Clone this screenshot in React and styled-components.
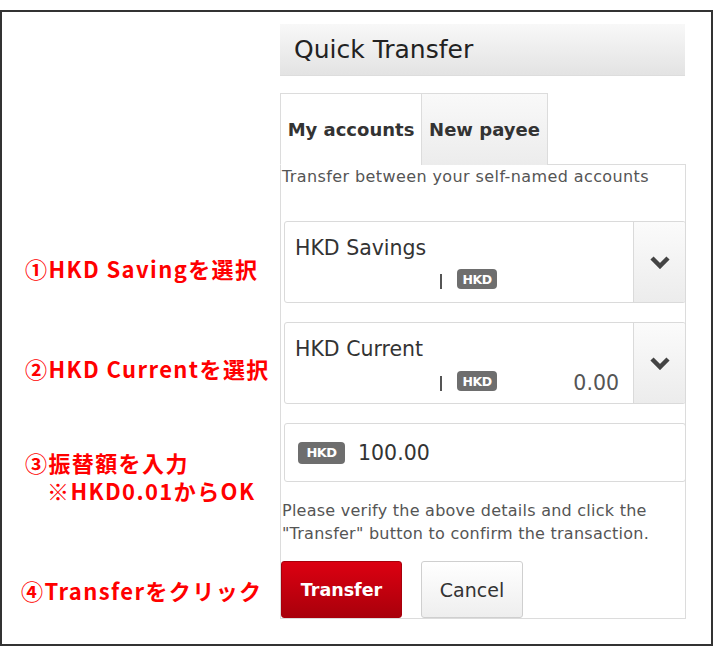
import React from "react";
import styled, { createGlobalStyle } from "styled-components";

const Global = createGlobalStyle`
  body {
    margin: 0;
    background: #fff;
  }
`;

const Frame = styled.div`
  margin-top: 10px;
  width: 713px;
  height: 636px;
  box-sizing: border-box;
  border: 2px solid #333;
  display: grid;
  grid-template-columns: 278px 406px;
  align-items: start;
`;

const Notes = styled.div`
  display: flex;
  flex-direction: column;
  padding-top: 242px;
  font-family: "Noto Sans CJK JP", sans-serif;
  font-weight: 700;
  font-size: 22px;
  letter-spacing: 1.4px;
  color: #ff0000;
`;

const Note = styled.div`
  line-height: 28px;
  white-space: nowrap;
  margin-top: ${(p) => p.$top || 0}px;
  padding-left: ${(p) => p.$left ?? 23}px;
`;

const NoteSub = styled.span`
  margin-left: 22px;
`;

const Widget = styled.div`
  padding-top: 12px;
  font-family: "DejaVu Sans", sans-serif;
  color: #333;
`;

const Header = styled.div`
  height: 52px;
  width: 405px;
  display: flex;
  align-items: center;
  padding-left: 14px;
  box-sizing: border-box;
  font-size: 25px;
  color: #222;
  background: linear-gradient(#f8f8f8, #e3e3e3);
  border-bottom: 1px solid #ddd;
`;

const Tabs = styled.div`
  display: flex;
  margin-top: 17px;
  position: relative;
  z-index: 1;
`;

const Tab = styled.div`
  height: 72px;
  box-sizing: border-box;
  display: flex;
  align-items: center;
  justify-content: center;
  font-weight: 700;
  font-size: 18px;
  color: #333;
  border: 1px solid #dcdcdc;
  border-bottom: ${(p) => (p.$active ? "1px solid #fff" : "none")};
  width: ${(p) => p.$w}px;
  background: ${(p) => (p.$active ? "#fff" : "linear-gradient(#f9f9f9, #ececec)")};
  margin-left: ${(p) => (p.$active ? 0 : -1)}px;
  margin-bottom: -1px;
`;

const Panel = styled.div`
  width: 406px;
  box-sizing: border-box;
  border: 1px solid #dcdcdc;
  display: flex;
  flex-direction: column;
  padding: 0 0 0 1px;
`;

const Hint = styled.p`
  margin: 0;
  padding-top: 1px;
  font-size: 16px;
  letter-spacing: 0.4px;
  line-height: 22px;
  color: #555;
  white-space: nowrap;
`;

const Select = styled.div`
  margin: ${(p) => p.$top}px 0 0 2px;
  width: 402px;
  height: 82px;
  box-sizing: border-box;
  border: 1px solid #dadada;
  border-radius: 3px;
  display: flex;
  overflow: hidden;
`;

const SelectBody = styled.div`
  flex: 1;
  padding: 13px 14px 0 10px;
  display: flex;
  flex-direction: column;
`;

const AccountName = styled.div`
  font-size: 20.5px;
  line-height: 26px;
  color: #333;
`;

const AccountLine = styled.div`
  display: grid;
  grid-template-columns: 162px auto 1fr;
  align-items: center;
  margin-top: 5px;
  height: 26px;
`;

const Bar = styled.span`
  justify-self: end;
  width: 2px;
  height: 15px;
  background: #555;
  margin-right: 15px;
  margin-top: 4px;
`;

const Badge = styled.span`
  display: inline-flex;
  align-items: center;
  justify-content: center;
  background: #6e6e6e;
  color: #fff;
  font-weight: 700;
  border-radius: 4px;
  letter-spacing: -0.5px;
  width: ${(p) => (p.$big ? 47 : 40)}px;
  height: ${(p) => (p.$big ? 22 : 20)}px;
  font-size: ${(p) => (p.$big ? 13 : 12.5)}px;
`;

const Balance = styled.span`
  justify-self: end;
  font-size: 20.5px;
  color: #555;
  margin-top: 4px;
`;

const DropButton = styled.div`
  width: 51px;
  border-left: 1px solid #dadada;
  background: linear-gradient(#fbfbfb, #ececec);
  display: flex;
  align-items: center;
  justify-content: center;
`;

const AmountBox = styled.div`
  margin: 19px 0 0 2px;
  width: 402px;
  height: 59px;
  box-sizing: border-box;
  border: 1px solid #dadada;
  border-radius: 3px;
  display: flex;
  align-items: center;
  gap: 13px;
  padding-left: 13px;
`;

const Amount = styled.span`
  font-size: 20.5px;
  color: #333;
`;

const Verify = styled.p`
  margin: 17px 0 0;
  font-size: 16px;
  letter-spacing: 0.25px;
  line-height: 23px;
  color: #555;
  white-space: nowrap;
`;

const Actions = styled.div`
  display: flex;
  gap: 19px;
  margin-top: 16px;
`;

const Button = styled.button`
  height: 57px;
  box-sizing: border-box;
  border-radius: 3px;
  font-family: "DejaVu Sans", sans-serif;
  cursor: pointer;
  width: ${(p) => (p.$primary ? 121 : 102)}px;
  font-size: ${(p) => (p.$primary ? 17.5 : 19)}px;
  font-weight: ${(p) => (p.$primary ? 700 : 400)};
  color: ${(p) => (p.$primary ? "#fff" : "#333")};
  border: 1px solid ${(p) => (p.$primary ? "#a8000b" : "#cfcfcf")};
  background: ${(p) =>
    p.$primary ? "linear-gradient(#dc0011, #a9000b)" : "linear-gradient(#fff, #eee)"};
  margin-left: ${(p) => (p.$primary ? -1 : 0)}px;
`;

function Chevron() {
  return (
    <svg width="22" height="14" viewBox="0 0 22 14">
      <polyline
        points="3,3 11,11 19,3"
        fill="none"
        stroke="#444"
        strokeWidth="4.5"
      />
    </svg>
  );
}

function AccountSelect({ name, balance, top }) {
  return (
    <Select $top={top}>
      <SelectBody>
        <AccountName>{name}</AccountName>
        <AccountLine>
          <Bar />
          <Badge>HKD</Badge>
          <Balance>{balance}</Balance>
        </AccountLine>
      </SelectBody>
      <DropButton>
        <Chevron />
      </DropButton>
    </Select>
  );
}

export default function App() {
  return (
    <>
      <Global />
      <Frame>
        <Notes>
          <Note>①HKD Savingを選択</Note>
          <Note $top={72}>②HKD Currentを選択</Note>
          <Note $top={66}>
            ③振替額を入力
            <br />
            <NoteSub>※HKD0.01からOK</NoteSub>
          </Note>
          <Note $top={72} $left={19}>④Transferをクリック</Note>
        </Notes>
        <Widget>
          <Header>Quick Transfer</Header>
          <Tabs>
            <Tab $active $w={142}>My accounts</Tab>
            <Tab $w={127}>New payee</Tab>
          </Tabs>
          <Panel>
            <Hint>Transfer between your self-named accounts</Hint>
            <AccountSelect name="HKD Savings" balance="" top={33} />
            <AccountSelect name="HKD Current" balance="0.00" top={19} />
            <AmountBox>
              <Badge $big>HKD</Badge>
              <Amount>100.00</Amount>
            </AmountBox>
            <Verify>
              Please verify the above details and click the
              <br />
              "Transfer" button to confirm the transaction.
            </Verify>
            <Actions>
              <Button $primary>Transfer</Button>
              <Button>Cancel</Button>
            </Actions>
          </Panel>
        </Widget>
      </Frame>
    </>
  );
}
